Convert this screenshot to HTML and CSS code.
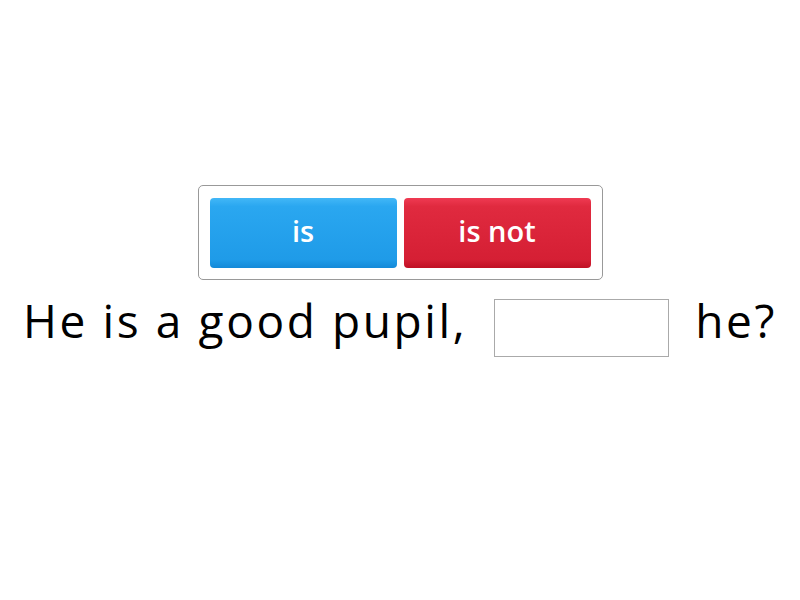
FILE: index.html
```html
<!DOCTYPE html>
<html lang="en">
<head>
  <meta charset="UTF-8">
  <title>Quiz</title>
  <link rel="stylesheet" href="styles.css">
</head>
<body>
  <div class="stage">
    <div class="options">
      <button class="option blue">is</button>
      <button class="option red">is not</button>
    </div>
    <p class="sentence"><span>He is a good pupil,</span><span class="blank"></span><span>he?</span></p>
  </div>
</body>
</html>
```

FILE: styles.css
```css
body {
  margin: 0;
  background: #fff;
  font-family: "Open Sans", Lato, sans-serif;
  color: #000;
}
.stage {
  display: flex;
  flex-direction: column;
  align-items: center;
  padding-top: 185px;
}
.options {
  display: flex;
  gap: 7px;
  padding: 12px 11px 11px 11px;
  border: 1px solid #999;
  border-radius: 5px;
}
.option {
  width: 187px;
  height: 70px;
  border: none;
  border-radius: 4px;
  color: #fff;
  font-family: "Open Sans", Lato, sans-serif;
  font-size: 29px;
  font-weight: 600;
  padding: 0 0 6px 0;
}
.blue {
  background: linear-gradient(#42b7f7, #2aa7f0 12%, #1f9be8 88%, #1389d8);
}
.red {
  background: linear-gradient(#ef3a52, #e02a3f 12%, #d51f34 88%, #c01024);
}
.sentence {
  margin: 9px 0 0 0;
  font-size: 46px;
  letter-spacing: 2.6px;
  display: flex;
  align-items: flex-start;
  white-space: pre;
}
.blank {
  display: inline-block;
  width: 173px;
  height: 56px;
  border: 1px solid #aaa;
  margin: 10px 26px 0 27px;
}
```
